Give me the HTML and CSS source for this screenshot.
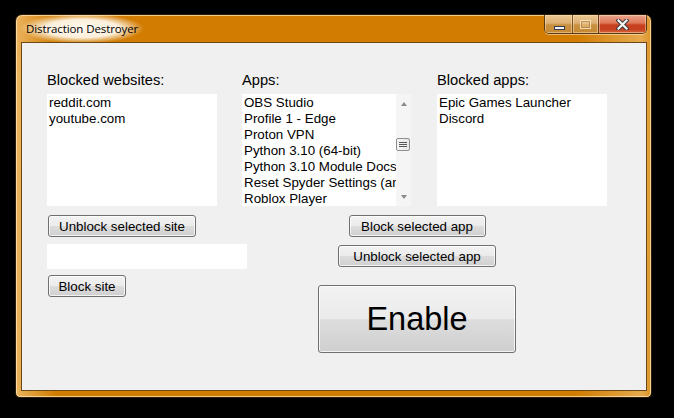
FILE: index.html
```html
<!DOCTYPE html>
<html>
<head>
<meta charset="utf-8">
<link rel="stylesheet" href="styles.css">
</head>
<body>
<div class="window">
  <div class="titlebar">
    <span class="title">Distraction Destroyer</span>
    <div class="caps">
      <div class="cap cap-min"><span class="min-glyph"></span></div>
      <div class="cap cap-max"><span class="max-glyph"></span></div>
      <div class="cap cap-close">
        <svg width="13" height="11" viewBox="0 0 13 11"><path d="M2.5 1.5 L10.5 9.5 M10.5 1.5 L2.5 9.5" stroke="#3c3c3c" stroke-width="4.2" stroke-linecap="square"/><path d="M2.5 1.5 L10.5 9.5 M10.5 1.5 L2.5 9.5" stroke="#f4f4f4" stroke-width="2.2" stroke-linecap="square"/></svg>
      </div>
    </div>
  </div>
  <div class="client">
    <div class="lists">
      <div class="col">
        <div class="label">Blocked websites:</div>
        <div class="listbox">
          <div class="item">reddit.com</div>
          <div class="item">youtube.com</div>
        </div>
      </div>
      <div class="col">
        <div class="label">Apps:</div>
        <div class="listwrap">
          <div class="listbox apps">
            <div class="item">OBS Studio</div>
            <div class="item">Profile 1 - Edge</div>
            <div class="item">Proton VPN</div>
            <div class="item">Python 3.10 (64-bit)</div>
            <div class="item">Python 3.10 Module Docs</div>
            <div class="item">Reset Spyder Settings (an</div>
            <div class="item">Roblox Player</div>
          </div>
          <div class="scrollbar">
            <div class="sb-btn"><span class="arrow-up"></span></div>
            <div class="sb-gap"></div>
            <div class="thumb"><span></span><span></span><span></span></div>
            <div class="sb-fill"></div>
            <div class="sb-btn"><span class="arrow-down"></span></div>
          </div>
        </div>
      </div>
      <div class="col">
        <div class="label">Blocked apps:</div>
        <div class="listbox">
          <div class="item">Epic Games Launcher</div>
          <div class="item">Discord</div>
        </div>
      </div>
    </div>
    <div class="controls">
      <div class="left-controls">
        <button class="btn btn-unblock-site">Unblock selected site</button>
        <div class="entry"></div>
        <button class="btn btn-block-site">Block site</button>
      </div>
      <div class="right-controls">
        <button class="btn btn-block-app">Block selected app</button>
        <button class="btn btn-unblock-app">Unblock selected app</button>
        <button class="btn btn-enable">Enable</button>
      </div>
    </div>
  </div>
</div>
</body>
</html>
```

FILE: styles.css
```css
* { box-sizing: border-box; }
html, body {
  margin: 0;
  padding: 0;
  background: #000;
  width: 674px;
  height: 418px;
  overflow: hidden;
}
body {
  padding-top: 14px;
  padding-left: 15px;
}
.window {
  width: 637px;
  height: 384px;
  border: 1px solid #2a1c08;
  border-radius: 7px 7px 5px 5px;
  padding: 0 4px 6px 5px;
  background:
    linear-gradient(to right, rgba(255,225,170,0.55) 0px, rgba(255,225,170,0) 40px, rgba(255,225,170,0) 560px, rgba(255,225,170,0.45) 625px, rgba(255,225,170,0.2) 637px),
    linear-gradient(to bottom, #d27c02 0px, #d27c02 40px, #d58506 60px, #d07c00 100%);
  box-shadow: inset 0 0 0 1px rgba(255, 230, 185, 0.75);
  display: flex;
  flex-direction: column;
}
.titlebar {
  height: 27px;
  display: flex;
  align-items: flex-start;
  flex: none;
}
.title {
  margin-left: -4px;
  padding: 6px 9px 5px 9px;
  font-family: "Open Sans", "Noto Sans", sans-serif;
  font-size: 11.5px;
  line-height: 16px;
  color: #000;
  background: radial-gradient(ellipse 62px 15px at 50% 50%, rgba(255,252,245,0.98) 0%, rgba(255,248,235,0.93) 60%, rgba(255,235,205,0) 100%);
  letter-spacing: -0.1px;
}
.caps {
  margin-left: auto;
  display: flex;
  height: 19px;
  border: 1px solid #5a3a12;
  border-top: none;
  border-radius: 0 0 5px 5px;
  overflow: hidden;
  box-shadow: 0 1px 0 rgba(255,230,190,0.6);
}
.cap {
  height: 18px;
  display: flex;
  align-items: center;
  justify-content: center;
  box-shadow: inset 0 0 0 1px rgba(255,235,200,0.45);
}
.cap-min {
  width: 28px;
  border-right: 1px solid #7a5424;
  background: linear-gradient(to bottom, #ebc793 0%, #ddb074 45%, #c9913f 55%, #c88a36 100%);
}
.cap-max {
  width: 26px;
  border-right: 1px solid #6a3a1c;
  background: linear-gradient(to bottom, #ebc793 0%, #ddb074 45%, #c9913f 55%, #c88a36 100%);
}
.cap-close {
  width: 47px;
  background: linear-gradient(to bottom, #eca48d 0%, #de7758 45%, #c9401e 55%, #c5401f 80%, #d86a3d 100%);
}
.min-glyph {
  width: 11px;
  height: 4px;
  margin-top: 7px;
  margin-left: 2px;
  background: #f2f2f2;
  border: 1px solid #383c50;
}
.max-glyph {
  width: 11px;
  height: 9px;
  border: 1px solid rgba(255,235,205,0.7);
  box-shadow: inset 0 0 0 1px rgba(160,110,50,0.6);
  background: rgba(255,230,190,0.35);
}
.cap-close svg { display: block; margin-top: 1px; }

.client {
  width: 626px;
  height: 349px;
  background: #f0f0f0;
  border: 1px solid #6a4818;
  padding: 29px 0 0 25px;
  font-family: "Liberation Sans", Arial, sans-serif;
  color: #000;
}
.lists {
  display: grid;
  grid-template-columns: 170px 169px 170px;
  column-gap: 25px;
}
.lists .col:nth-child(3) { margin-left: 1px; }
.label {
  font-size: 14.67px;
  line-height: 17px;
  height: 17px;
  margin-bottom: 5px;
}
.listbox {
  width: 170px;
  height: 112px;
  background: #fff;
  padding: 1px 0 0 2px;
  overflow: hidden;
}
.item {
  font-size: 13.33px;
  line-height: 16px;
  white-space: nowrap;
}
.listwrap {
  display: flex;
}
.listbox.apps {
  width: 154px;
}
.scrollbar {
  width: 15px;
  height: 112px;
  background: #f5f5f5;
  display: flex;
  flex-direction: column;
}
.sb-btn {
  height: 17px;
  flex: none;
  display: flex;
  align-items: center;
  justify-content: center;
}
.arrow-up {
  width: 0; height: 0;
  border-left: 3.5px solid transparent;
  border-right: 3.5px solid transparent;
  border-bottom: 4px solid #8a8a8a;
  margin-left: 1px;
  margin-top: 3px;
}
.arrow-down {
  width: 0; height: 0;
  border-left: 3.5px solid transparent;
  border-right: 3.5px solid transparent;
  border-top: 4px solid #8a8a8a;
  margin-left: 1px;
  margin-bottom: 1px;
}
.sb-gap { height: 27px; flex: none; }
.sb-fill { flex: 1; }
.thumb {
  height: 13px;
  width: 14px;
  flex: none;
  border: 1px solid #8e8f8f;
  border-radius: 2px;
  background: linear-gradient(to right, #f6f6f6, #e6e6e6);
  display: flex;
  flex-direction: column;
  align-items: center;
  justify-content: center;
  gap: 1px;
}
.thumb span {
  width: 8px;
  height: 1px;
  background: #555;
}

.controls {
  display: flex;
  margin-top: 9px;
}
.left-controls {
  width: 200px;
  display: flex;
  flex-direction: column;
  align-items: flex-start;
}
.right-controls {
  width: 200px;
  margin-left: 70px;
  display: flex;
  flex-direction: column;
  align-items: center;
}
.btn {
  font-family: "Liberation Sans", Arial, sans-serif;
  font-size: 13.33px;
  color: #000;
  height: 22px;
  padding: 0;
  margin: 0;
  border: 1px solid #707070;
  border-radius: 3px;
  background: linear-gradient(to bottom, #f2f2f2 0%, #ebebeb 50%, #dddddd 51%, #cfcfcf 100%);
  box-shadow: inset 0 0 0 1px rgba(255,255,255,0.75);
  line-height: 19px;
  text-align: center;
}
.btn-unblock-site { width: 148px; margin-left: 1px; }
.entry {
  width: 200px;
  height: 25px;
  background: #fff;
  margin-top: 7px;
}
.btn-block-site { width: 78px; margin-top: 6px; margin-left: 1px; }
.btn-block-app { width: 137px; }
.btn-unblock-app { width: 158px; margin-top: 8px; }
.btn-enable {
  width: 198px;
  height: 68px;
  margin-top: 18px;
  font-size: 32.5px;
  line-height: 64px;
}
```
